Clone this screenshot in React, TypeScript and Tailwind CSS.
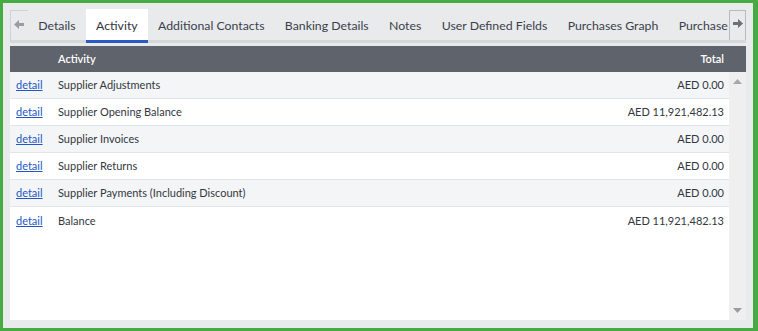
import { useState } from "react";

const tabs = [
  "Details",
  "Activity",
  "Additional Contacts",
  "Banking Details",
  "Notes",
  "User Defined Fields",
  "Purchases Graph",
  "Purchase Orders",
];

const rows = [
  { name: "Supplier Adjustments", total: "AED 0.00" },
  { name: "Supplier Opening Balance", total: "AED 11,921,482.13" },
  { name: "Supplier Invoices", total: "AED 0.00" },
  { name: "Supplier Returns", total: "AED 0.00" },
  { name: "Supplier Payments (Including Discount)", total: "AED 0.00" },
  { name: "Balance", total: "AED 11,921,482.13" },
];

export default function App() {
  const [active, setActive] = useState("Activity");

  return (
    <div
      className="w-[758px] h-[331px] border-[3px] border-r-[5px] border-[#46ab43] bg-[#e9eaeb] flex flex-col overflow-hidden"
      style={{ fontFamily: "Lato, 'Open Sans', sans-serif" }}
    >
      <div className="flex flex-col px-[7px] pt-[6px] pb-[8px] h-full">
        {/* tab strip */}
        <div className="flex h-[34px] shrink-0 border-b-[3px] border-[#d6d7d9]">
          <button className="w-[18px] h-[31px] mt-[1px] border-l border-t border-[#cfd1d4] flex items-start justify-center pt-[8px] text-[#9a9ca0]">
            <svg width="11" height="11" viewBox="0 0 11 11">
              <path d="M0 5.5 L5 1 V4 H10 V7 H5 V10 Z" fill="currentColor" />
            </svg>
          </button>
          <div className="flex-1 overflow-hidden flex h-[34px]">
            {tabs.map((t) => (
              <button
                key={t}
                onClick={() => setActive(t)}
                className={
                  "shrink-0 whitespace-nowrap px-[10.2px] text-[12.3px] h-[34px] border-b-[3px] pt-[3px] " +
                  (active === t
                    ? "bg-white text-[#2f3441] border-[#2a5bc4]"
                    : "text-[#3a3f4c] border-transparent")
                }
              >
                {t}
              </button>
            ))}
          </div>
          <button className="w-[17px] h-[30px] mt-[1px] border-l border-t border-r border-[#b8babd] flex items-start justify-center pt-[7px] text-[#6b6e73]">
            <svg width="11" height="11" viewBox="0 0 11 11">
              <path d="M11 5.5 L6 1 V4 H1 V7 H6 V10 Z" fill="currentColor" />
            </svg>
          </button>
        </div>

        {/* table */}
        <div className="mt-[3px] flex flex-col flex-1 min-h-0">
          <div className="h-[26px] bg-[#5f636b] text-white text-[11px] font-semibold flex items-center shrink-0 pt-[1px]">
            <div className="w-[48px]" />
            <div className="flex-1">Activity</div>
            <div className="pr-[22px]">Total</div>
          </div>
          <div className="flex flex-1 min-h-0">
            <div className="flex-1 bg-white">
              {rows.map((r, i) => (
                <div
                  key={r.name}
                  className={
                    "h-[27px] flex items-center text-[11px] text-[#333840] border-b border-[#e3e4e6] pt-[1px] " +
                    (i % 2 === 0 ? "bg-[#f4f5f7]" : "bg-white") +
                    (i === rows.length - 1 ? " border-b-0" : "")
                  }
                >
                  <a href="#" className="w-[48px] pl-[6px] text-[#2457c5] underline">
                    detail
                  </a>
                  <div className="flex-1">{r.name}</div>
                  <div className="pr-[5px]">{r.total}</div>
                </div>
              ))}
            </div>
            <div className="w-[17px] bg-[#efefef] flex flex-col justify-between items-center py-[7px]">
              <svg width="9" height="5" viewBox="0 0 9 5">
                <path d="M0 5 L4.5 0 L9 5 Z" fill="#a5a7aa" />
              </svg>
              <svg width="9" height="5" viewBox="0 0 9 5">
                <path d="M0 0 L4.5 5 L9 0 Z" fill="#9a9c9f" />
              </svg>
            </div>
          </div>
        </div>
      </div>
    </div>
  );
}
